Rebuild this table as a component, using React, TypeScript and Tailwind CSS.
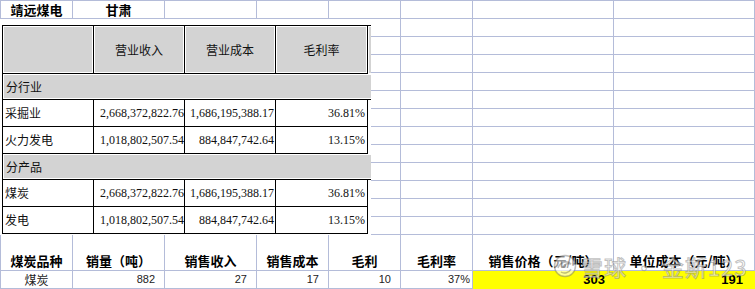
import React from "react";

const G = "border-[#b4bcd9]";
const CJK = "font-['Noto_Sans_CJK_SC',sans-serif]";
const SERIF = "font-['Liberation_Serif','Noto_Sans_CJK_SC',serif]";

function TopRow() {
  const cells = ["靖远煤电", "甘肃", "", "", "", "", "", ""];
  return (
    <div className={`grid grid-cols-[72px_92px_92px_72px_72px_72px_141px_141px] border-t border-l ${G}`}>
      {cells.map((c, i) => (
        <div
          key={i}
          className={`h-[18px] border-r border-b ${G} flex items-center justify-center text-[13px] font-bold leading-none text-black ${CJK}`}
        >
          {c}
        </div>
      ))}
    </div>
  );
}

const W = ["w-[91px]", "w-[91px]", "w-[91px]", "w-[92px]", "w-[90px]"];

function FinTable() {
  const hdr = ["", "营业收入", "营业成本", "毛利率", ""];
  const row = (label: string, a: string, b: string, c: string) => (
    <div className="flex h-[27px]">
      <div className={`${W[0]} shrink-0 border-r border-b border-black flex items-center pl-[2px] text-[12px] text-[#111] ${CJK}`}>{label}</div>
      <div className={`${W[1]} shrink-0 border-r border-b border-black flex items-center justify-end pr-[0px] text-[12px] text-[#111] ${SERIF}`}>{a}</div>
      <div className={`${W[2]} shrink-0 border-r border-b border-black flex items-center justify-end pr-[1px] text-[12px] text-[#111] ${SERIF}`}>{b}</div>
      <div className={`${W[3]} shrink-0 border-r border-b border-black flex items-center justify-end pr-[2px] text-[12px] text-[#111] ${SERIF}`}>{c}</div>
      <div className={`${W[4]} shrink-0`} />
    </div>
  );
  const group = (label: string) => (
    <div className="flex h-[26px]">
      <div className={`w-[456px] shrink-0 border-b border-black bg-[#d3d3d3] shadow-[inset_0_0_0_1px_#fff] flex items-center pl-[3px] text-[12px] text-[#111] ${CJK}`}>
        {label}
      </div>
    </div>
  );
  return (
    <div className="w-[460px] border-t border-l border-black">
      <div className="flex h-[48px]">
        {hdr.map((h, i) => (
          <div
            key={i}
            className={`${W[i]} shrink-0 ${i < 4 ? "border-r border-b border-black" : ""} bg-[#d3d3d3] shadow-[inset_0_0_0_1px_#fff] flex items-center justify-center text-[12px] text-[#111] ${CJK}`}
          >
            {h}
          </div>
        ))}
      </div>
      {group("分行业")}
      {row("采掘业", "2,668,372,822.76", "1,686,195,388.17", "36.81%")}
      {row("火力发电", "1,018,802,507.54", "884,847,742.64", "13.15%")}
      {group("分产品")}
      {row("煤炭", "2,668,372,822.76", "1,686,195,388.17", "36.81%")}
      {row("发电", "1,018,802,507.54", "884,847,742.64", "13.15%")}
    </div>
  );
}

function Middle() {
  return (
    <div className="flex h-[216px]">
      <div className="w-[371px] shrink-0 bg-white pt-[6px] pl-[2px] overflow-hidden">
        <FinTable />
      </div>
      <div className="grid grid-cols-[30px_72px_141px_141px] grid-rows-[repeat(12,18px)]">
        {Array.from({ length: 48 }).map((_, i) => (
          <div key={i} className={`border-r border-b ${G}`} />
        ))}
      </div>
    </div>
  );
}

function Bottom() {
  const heads = ["煤炭品种", "销量（吨）", "销售收入", "销售成本", "毛利", "毛利率", "销售价格（元/吨）", "单位成本（元/吨）"];
  const num = `text-[11px] text-[#222] font-['Liberation_Sans',sans-serif]`;
  return (
    <div>
      <div className={`grid grid-cols-[72px_92px_92px_72px_72px_72px_141px_141px] border-l ${G}`}>
        {heads.map((h, i) => (
          <div
            key={i}
            className={`h-[36px] border-r border-b ${G} flex items-end justify-center pb-[1px] text-[13px] font-bold leading-[16px] text-black whitespace-nowrap ${CJK}`}
          >
            {h}
          </div>
        ))}
      </div>
      <div className={`grid grid-cols-[72px_92px_92px_72px_72px_72px_141px_141px] border-l ${G}`}>
        <div className={`h-[18px] border-r border-b ${G} flex items-center justify-center text-[12px] text-[#222] ${CJK}`}>煤炭</div>
        <div className={`h-[18px] border-r border-b ${G} flex items-center justify-end pr-[9px] ${num}`}>882</div>
        <div className={`h-[18px] border-r border-b ${G} flex items-center justify-end pr-[9px] ${num}`}>27</div>
        <div className={`h-[18px] border-r border-b ${G} flex items-center justify-end pr-[9px] ${num}`}>17</div>
        <div className={`h-[18px] border-r border-b ${G} flex items-center justify-end pr-[9px] ${num}`}>10</div>
        <div className={`h-[18px] border-r border-b ${G} flex items-center justify-end pr-[2px] ${num}`}>37%</div>
        <div className="h-[18px] bg-[#ffff00] flex items-center justify-end pr-[9px] text-[13px] font-bold text-black font-['Liberation_Sans',sans-serif]">303</div>
        <div className="h-[18px] bg-[#ffff00] flex items-center justify-end pr-[12px] text-[13px] font-bold text-black font-['Liberation_Sans',sans-serif]">191</div>
      </div>
    </div>
  );
}

function Watermark() {
  return (
    <div className="absolute left-[553px] top-[252px] flex items-center gap-[4px] pointer-events-none opacity-80">
      <svg width="24" height="28" viewBox="0 0 24 28">
        <circle cx="12" cy="14" r="10.5" fill="rgba(255,255,255,0.75)" stroke="rgba(110,110,110,0.55)" strokeWidth="1.5" />
        <path d="M5 16c2-6 9-8 13-4-3-1-6 0-8 3" fill="none" stroke="rgba(110,110,110,0.55)" strokeWidth="1.5" />
        <path d="M8 20c3 2 8 1 10-3" fill="none" stroke="rgba(110,110,110,0.55)" strokeWidth="1.5" />
      </svg>
      <span
        className={`text-[22px] leading-none text-white/80 [-webkit-text-stroke:1px_rgba(110,110,110,0.55)] tracking-[1px] whitespace-nowrap ${CJK}`}
      >
        雪球 · 金斯123
      </span>
    </div>
  );
}

export default function App() {
  return (
    <div className="relative w-[755px] h-[289px] overflow-hidden bg-white">
      <TopRow />
      <Middle />
      <Bottom />
      <Watermark />
    </div>
  );
}
